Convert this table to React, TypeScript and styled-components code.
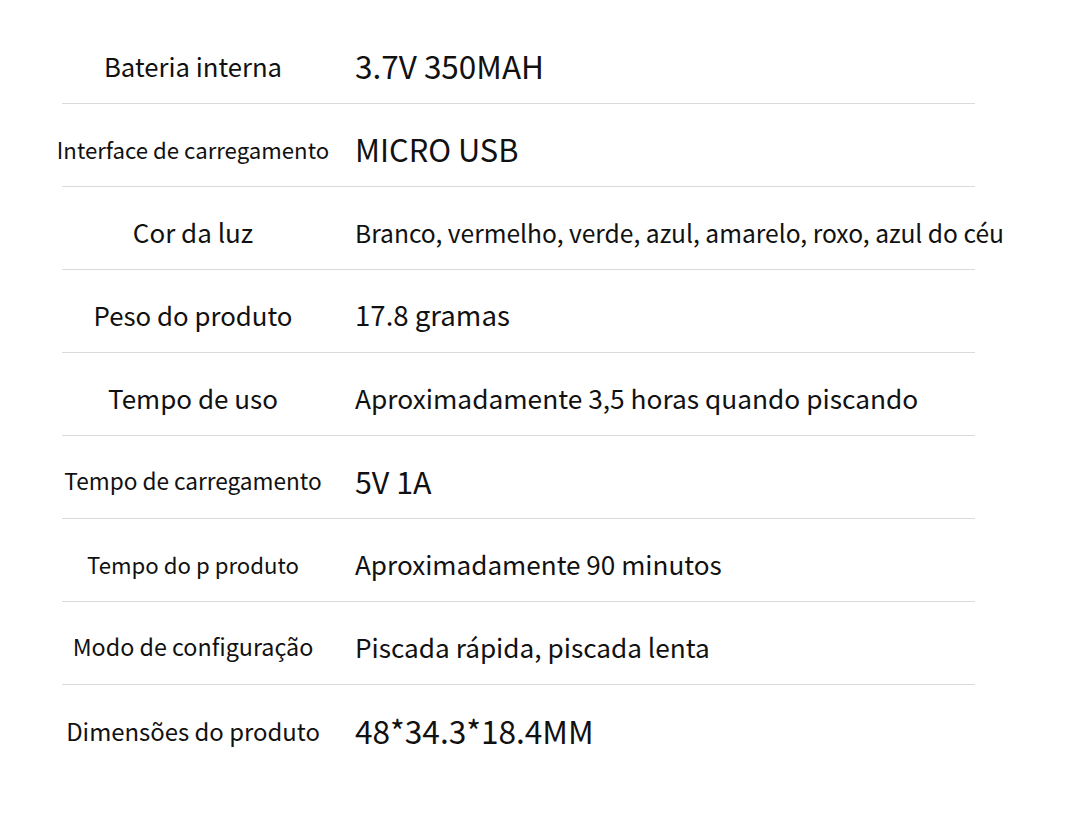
import React from "react";
import styled, { createGlobalStyle } from "styled-components";

interface Spec {
  label: string;
  value: string;
  labelSize: number;
  valueSize: number;
}

const specs: Spec[] = [
  { label: "Bateria interna", value: "3.7V 350MAH", labelSize: 25.7, valueSize: 31.5 },
  { label: "Interface de carregamento", value: "MICRO USB", labelSize: 22.2, valueSize: 30.8 },
  {
    label: "Cor da luz",
    value: "Branco, vermelho, verde, azul, amarelo, roxo, azul do céu",
    labelSize: 26,
    valueSize: 24.6,
  },
  { label: "Peso do produto", value: "17.8 gramas", labelSize: 25.8, valueSize: 27.6 },
  {
    label: "Tempo de uso",
    value: "Aproximadamente 3,5 horas quando piscando",
    labelSize: 26,
    valueSize: 26.3,
  },
  { label: "Tempo de carregamento", value: "5V 1A", labelSize: 22.6, valueSize: 30.4 },
  {
    label: "Tempo do p produto",
    value: "Aproximadamente 90 minutos",
    labelSize: 22.2,
    valueSize: 26.1,
  },
  {
    label: "Modo de configuração",
    value: "Piscada rápida, piscada lenta",
    labelSize: 23.3,
    valueSize: 26.2,
  },
  { label: "Dimensões do produto", value: "48*34.3*18.4MM", labelSize: 23.9, valueSize: 31.6 },
];

const GlobalStyle = createGlobalStyle`
  html, body {
    margin: 0;
    padding: 0;
    background: #ffffff;
  }
  body {
    font-family: "Noto Sans CJK SC", "Noto Sans", sans-serif;
    color: #111111;
  }
`;

const Table = styled.div`
  width: 1085px;
  height: 828px;
  padding-top: 21px;
  box-sizing: border-box;
  overflow: hidden;
`;

// divider line only spans 62..975, so the row is inset and the cells pull back out
const Row = styled.div`
  margin-left: 62px;
  width: 913px;
  height: 83px;
  border-bottom: 1px solid #dadada;
  box-sizing: border-box;
  display: flex;
  &:last-child {
    border-bottom: none;
  }
`;

const Cells = styled.div`
  margin-left: -62px;
  width: 1085px;
  height: 100%;
  display: grid;
  grid-template-columns: 276px 1fr;
  column-gap: 24px;
  align-items: center;
  padding-left: 55px;
  padding-top: 8px;
  box-sizing: border-box;
`;

const Label = styled.div<{ $size: number }>`
  font-size: ${(p) => p.$size}px;
  text-align: center;
  white-space: nowrap;
  line-height: 1;
`;

const Value = styled.div<{ $size: number }>`
  font-size: ${(p) => p.$size}px;
  white-space: nowrap;
  line-height: 1;
`;

const App: React.FC = () => {
  return (
    <>
      <GlobalStyle />
      <Table>
        {specs.map((s) => (
          <Row key={s.label}>
            <Cells>
              <Label $size={s.labelSize}>{s.label}</Label>
              <Value $size={s.valueSize}>{s.value}</Value>
            </Cells>
          </Row>
        ))}
      </Table>
    </>
  );
};

export default App;
